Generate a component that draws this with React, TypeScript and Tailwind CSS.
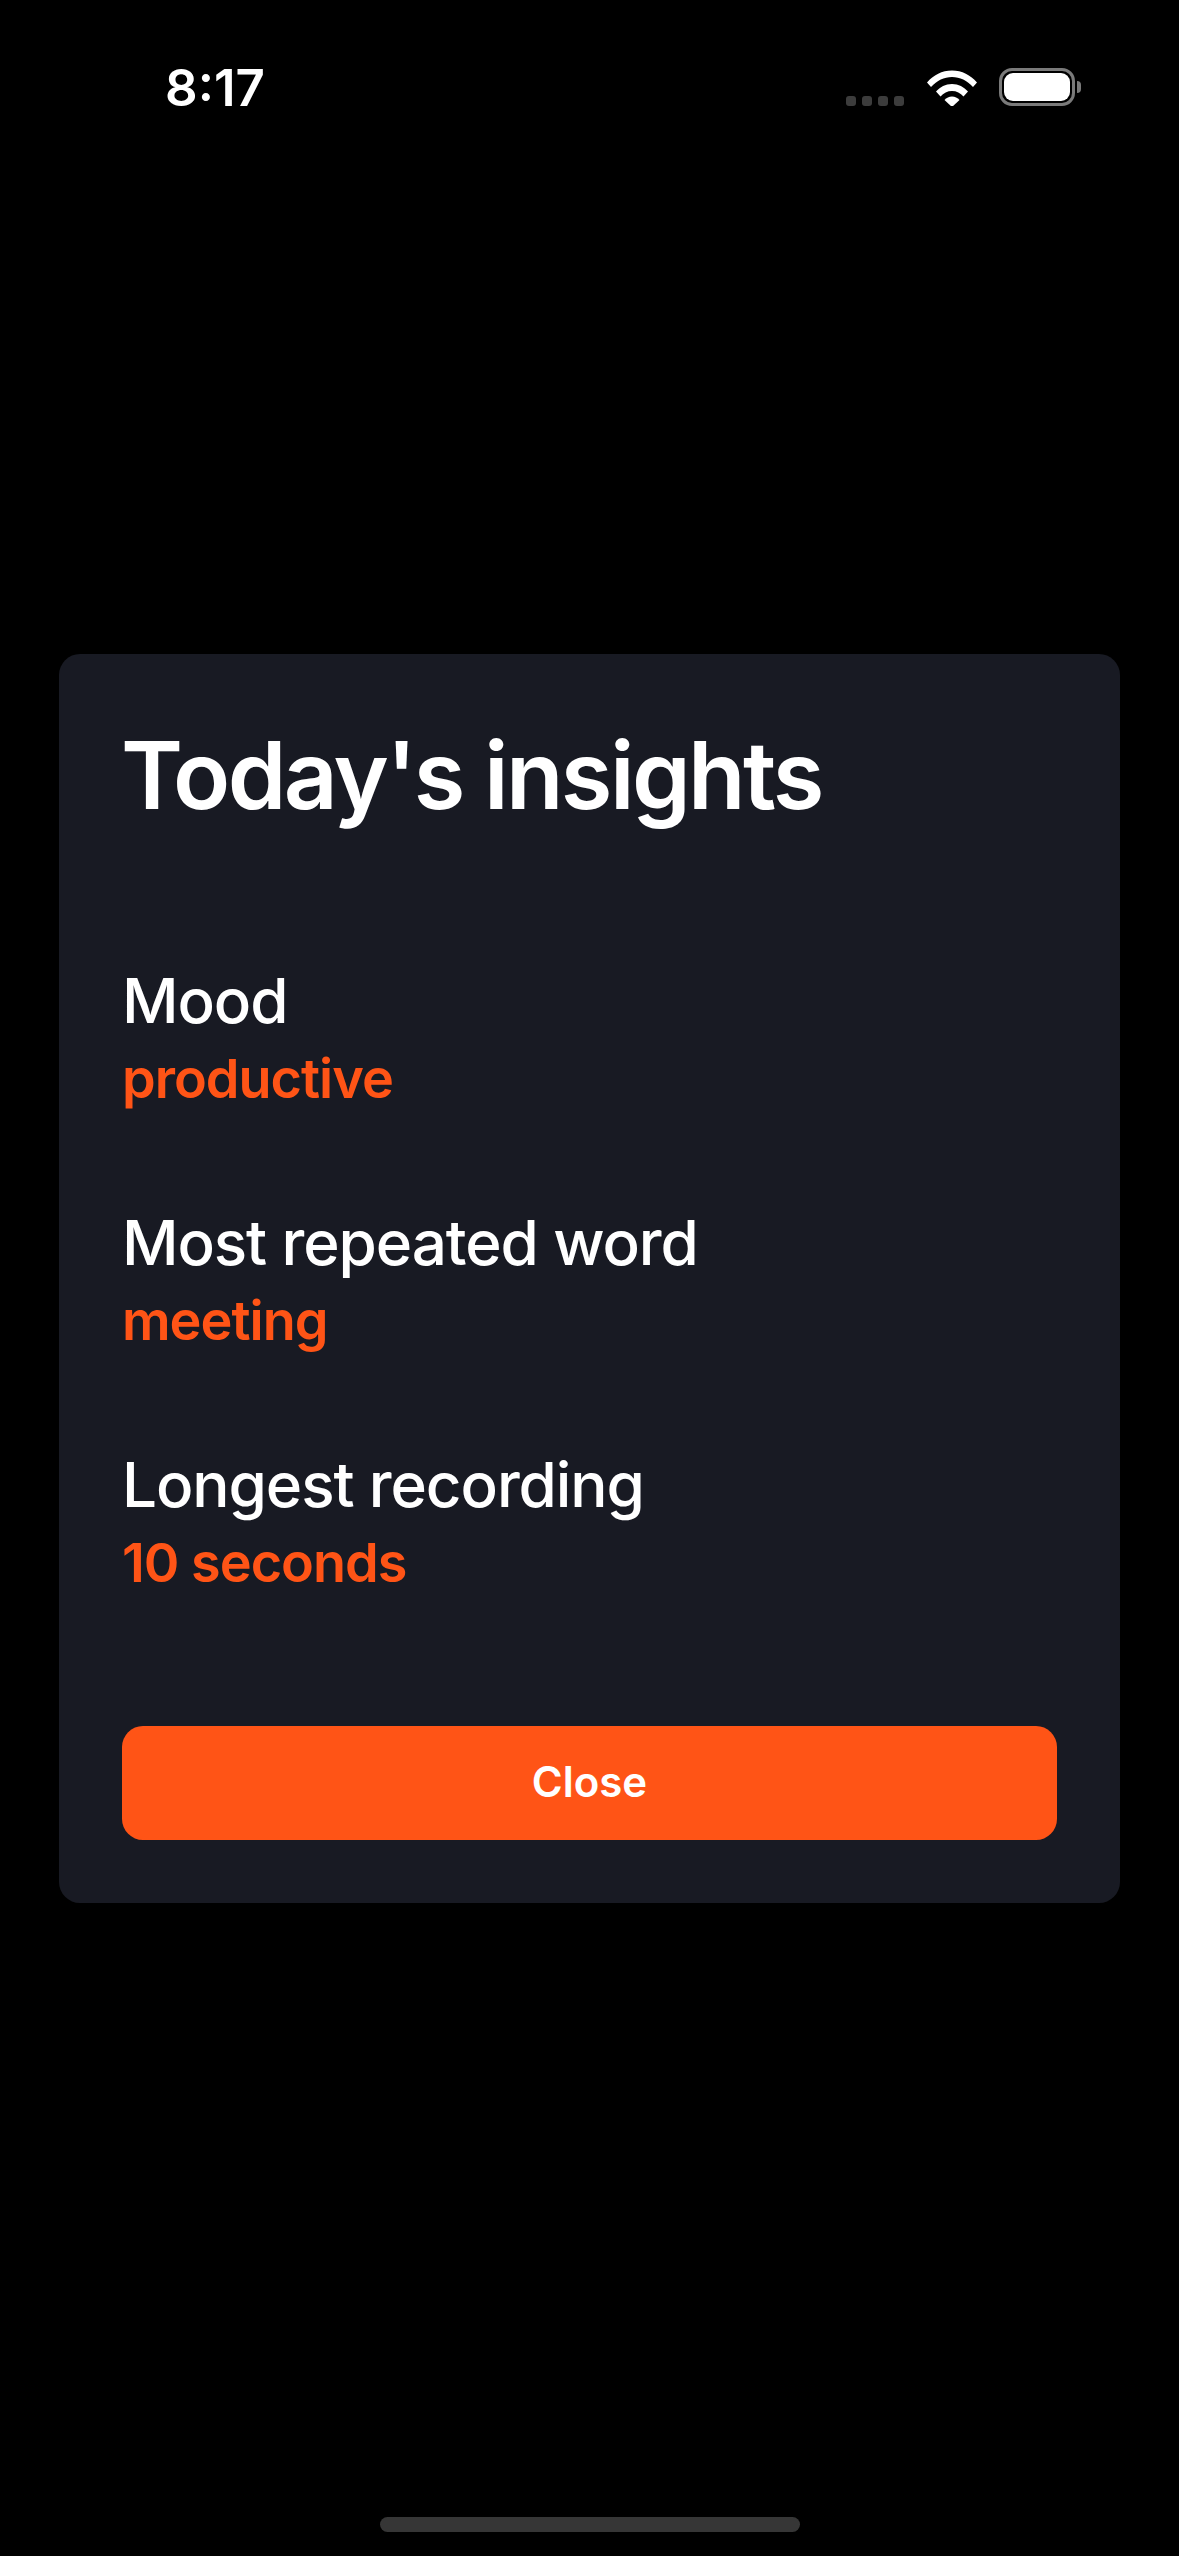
export default function App() {
  const rows = [
    ["Mood", "productive"],
    ["Most repeated word", "meeting"],
    ["Longest recording", "10 seconds"],
  ];
  return (
    <div className="relative flex h-[2556px] w-[1179px] items-center justify-center overflow-hidden bg-black font-['Inter',sans-serif] text-white">
      <div className="absolute left-0 top-[21px] flex h-[132px] w-full items-center justify-between pl-[165px] pr-[98px]">
        <span className="text-[51px] font-semibold leading-none">8:17</span>
        <div className="flex items-center">
          <div className="mr-[23px] mt-[28px] flex gap-[6px]">
            {[0, 1, 2, 3].map((i) => (
              <span key={i} className="h-[10px] w-[10px] rounded-[3px] bg-[#3c3c3c]" />
            ))}
          </div>
          <svg width="50" height="37" viewBox="0 0 50 37" className="mr-[22px]">
            <path d="M0 13.5C6.5 6 15 1.5 25 1.5S43.500 6 50 13.500L46 18C40 11.500 33 8 25 8S10 11.500 4 18Z" fill="#fff" />
            <path d="M9 22.500C13 18 18.500 15 25 15S37 18 41 22.500L36.500 27.500C33.500 24 29.500 22 25 22S16.500 24 13.500 27.500Z" fill="#fff" />
            <path d="M17.500 31C19.500 29 22 27.500 25 27.500S30.500 29 32.500 31L25 38Z" fill="#fff" />
          </svg>
          <div className="flex items-center">
            <div className="h-[38px] w-[76px] rounded-[13px] border-[3px] border-[#7a7a7a] p-[2px]">
              <div className="h-full w-full rounded-[9px] bg-white" />
            </div>
            <div className="ml-[2px] h-[12px] w-[4px] rounded-r-[4px] bg-[#7a7a7a]" />
          </div>
        </div>
      </div>

      <div className="flex h-[1249px] w-[1061px] flex-col rounded-[21px] bg-[#181a23] px-[63px] pt-[71px]">
        <h1 className="-ml-[1px] text-[94px] font-semibold leading-[100px] tracking-[-2.6px]">Today's insights</h1>
        <div className="mt-[140px] flex flex-col gap-[96px]">
          {rows.map(([label, value]) => (
            <div key={label} className="flex flex-col">
              <span className="text-[62px] font-medium leading-[72px] tracking-[-1.1px]">{label}</span>
              <span className="mt-[10px] text-[54px] font-semibold leading-[64px] tracking-[-1px] text-[#ff5416]">{value}</span>
            </div>
          ))}
        </div>
        <button className="mt-auto mb-[63px] flex h-[114px] w-full items-center justify-center rounded-[21px] bg-[#ff5416] pb-[2px] text-[42px] font-semibold">
          Close
        </button>
      </div>

      <div className="absolute bottom-[24px] left-[380px] h-[15px] w-[420px] rounded-full bg-[#363636]" />
    </div>
  );
}
